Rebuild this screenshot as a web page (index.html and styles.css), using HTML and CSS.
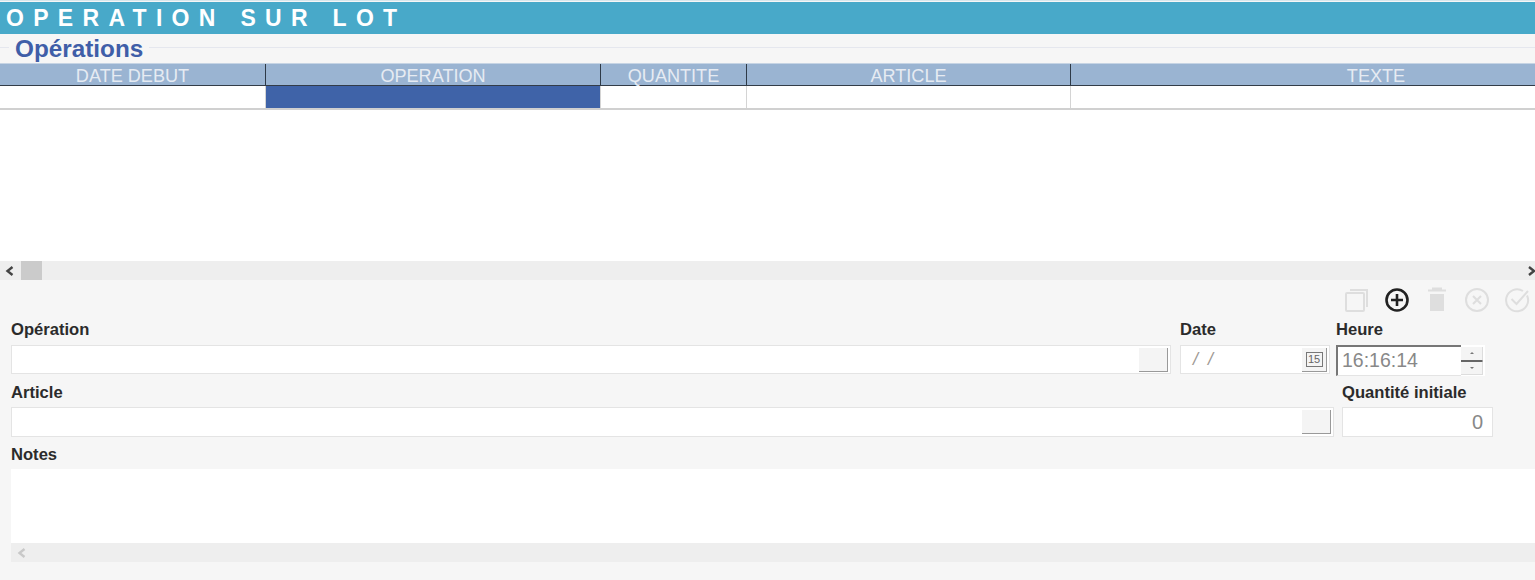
FILE: index.html
```html
<!DOCTYPE html>
<html lang="fr">
<head>
<meta charset="utf-8">
<title>Operation sur lot</title>
<link rel="stylesheet" href="styles.css">
</head>
<body>
<header class="title-bar">OPERATION SUR LOT</header>
<div class="section-head"><span class="section-title">Opérations</span></div>
<div class="grid-wrap">
  <div class="grid-row grid-header">
    <div class="c1">DATE DEBUT</div>
    <div class="c2">OPERATION</div>
    <div class="c3">QUANTITE</div>
    <div class="c4">ARTICLE</div>
    <div class="c5">TEXTE</div>
  </div>
  <div class="grid-row grid-body">
    <div class="c1"></div>
    <div class="c2 selected"></div>
    <div class="c3"></div>
    <div class="c4"></div>
    <div class="c5"></div>
  </div>
  <div class="grid-empty"></div>
  <div class="hscroll">
    <svg class="arrow" width="9" height="10" viewBox="0 0 9 10"><path d="M7.500 1 2.500 5l5 4" fill="none" stroke="#444" stroke-width="2.400"/></svg>
    <span class="thumb"></span>
    <svg class="arrow arrow-right" width="7" height="10" viewBox="0 0 7 10"><path d="M1 1 6 5 1 9" fill="none" stroke="#444" stroke-width="2.400"/></svg>
  </div>
</div>
<main class="form">
  <div class="toolbar">
    <svg class="tool" width="26" height="26" viewBox="0 0 26 26" fill="none" stroke="#dedede" stroke-width="2"><rect x="2" y="6" width="18" height="18" rx="1"/><path d="M6 3h17v17"/></svg>
    <svg class="tool" width="26" height="26" viewBox="0 0 26 26" fill="none" stroke="#222" stroke-width="2.600"><circle cx="13" cy="13" r="10.500"/><path d="M7 13h12M13 7v12"/></svg>
    <svg class="tool" width="26" height="26" viewBox="0 0 26 26" fill="none"><path d="M4 3.500h18M8 1.500h10" stroke="#dedede" stroke-width="2"/><path d="M6 7h14v17H6z" fill="#dedede"/></svg>
    <svg class="tool" width="26" height="26" viewBox="0 0 26 26" fill="none" stroke="#dedede" stroke-width="2"><circle cx="13" cy="13" r="11"/><path d="m9 9 8 8M17 9l-8 8"/></svg>
    <svg class="tool" width="26" height="26" viewBox="0 0 26 26" fill="none" stroke="#dedede" stroke-width="2"><path d="M23 8.500A11 11 0 1 1 19 4"/><path d="m7.500 12 5 5L24 4"/></svg>
  </div>
  <div class="form-row">
    <div class="field f-op">
      <label class="label">Opération</label>
      <div class="input"><span class="pick"></span></div>
    </div>
    <div class="field f-date">
      <label class="label">Date</label>
      <div class="input date-input">
        <span class="value-date">/ /</span>
        <span class="pick pick-cal"><span class="cal">15</span></span>
      </div>
    </div>
    <div class="field f-time">
      <label class="label">Heure</label>
      <div class="time-wrap">
        <div class="time-input">16:16:14</div>
        <div class="spin">
          <span class="spin-btn"><i class="tri-up"></i></span>
          <span class="spin-btn spin-low"><i class="tri-down"></i></span>
        </div>
      </div>
    </div>
  </div>
  <div class="form-row row-two">
    <div class="field f-art">
      <label class="label">Article</label>
      <div class="input tall"><span class="pick"></span></div>
    </div>
    <div class="field f-qty">
      <label class="label">Quantité initiale</label>
      <div class="input tall qty-input">0</div>
    </div>
  </div>
  <div class="notes">
    <label class="label">Notes</label>
    <div class="notes-area"></div>
    <div class="notes-scroll">
      <svg width="9" height="10" viewBox="0 0 9 10"><path d="M7.500 1 2.500 5l5 4" fill="none" stroke="#c8c8c8" stroke-width="2.400"/></svg>
    </div>
  </div>
</main>
</body>
</html>
```
FILE: styles.css
```css
* { box-sizing: border-box; }
html, body { margin: 0; height: 580px; overflow: hidden; }
body { background: #f6f6f6; font-family: "Liberation Sans", Arial, sans-serif; color: #222; border-top: 1px solid #d6e6ec; }

.title-bar {
  margin-top: 1px;
  height: 32px;
  background: #48a9c9;
  color: #fff;
  font-size: 23px;
  font-weight: 700;
  letter-spacing: 9.300px;
  line-height: 33px;
  padding-left: 6px;
  white-space: nowrap;
  overflow: hidden;
}

.section-head {
  height: 29px;
  display: flex;
  align-items: center;
  background: linear-gradient(#e5e7ee, #e5e7ee) 0 13px / 100% 1px no-repeat;
  padding-left: 9px;
}
.section-title {
  background: #f6f6f6;
  color: #3f5ea8;
  font-size: 24.300px;
  font-weight: 700;
  padding: 0 6px;
  line-height: 27px;
  margin-top: -1px;
}

.grid-wrap { background: #fff; }
.grid-row { display: grid; grid-template-columns: 266px 335px 146px 324px 464px; }
.grid-header { height: 23px; background: #9ab4d2; border-bottom: 1px solid #333c48; border-top: 1px solid #c6d4e4; }
.grid-header div {
  color: #e6ebf2;
  font-size: 18.100px;
  line-height: 24px;
  height: 21px;
  text-align: center;
  border-right: 1px solid #2e3a48;
  white-space: nowrap;
}
.grid-header .c5 { border-right: 0; padding-left: 146px; }
.grid-body { height: 24px; border-bottom: 2px solid #d0d0d0; }
.grid-body div { border-right: 1px solid #d4d4d4; }
.grid-body .c5 { border-right: 0; }
.grid-body .selected { background: #3f63a8; }
.grid-empty { height: 151px; }

.hscroll { height: 19px; background: #eeeeee; display: flex; align-items: center; padding-left: 5px; }
.thumb { width: 21px; height: 19px; background: #cbcbcb; margin-left: 7px; }
.arrow-right { margin-left: auto; }

.form { padding-left: 11px; }
.toolbar { display: flex; justify-content: flex-end; gap: 14px; height: 28px; margin-top: 7px; padding-right: 5px; }
.tool { flex: none; }

.form-row { display: flex; margin-top: 6px; }
.row-two { margin-top: 8px; }
.field { display: flex; flex-direction: column; flex: none; }
.label { font-size: 16.600px; font-weight: 700; color: #2b2b2b; line-height: 18px; white-space: nowrap; display: block; }

.f-op { width: 1160px; margin-right: 9px; }
.f-date { width: 150px; margin-right: 6px; }
.f-time { width: 149px; }
.f-art { width: 1323px; margin-right: 8px; }
.f-qty { width: 151px; }

.input {
  margin-top: 6px;
  height: 29px;
  background: #fff;
  border: 1px solid #e4e4e4;
  display: flex;
  justify-content: flex-end;
  align-items: center;
  padding-right: 2px;
}
.tall { height: 30px; margin-top: 5px; }
.pick {
  width: 29px;
  height: 24px;
  background: #f4f4f4;
  border-right: 1px solid #999;
  border-bottom: 1px solid #999;
  display: flex;
  align-items: center;
  justify-content: center;
}
.date-input { justify-content: space-between; color: #999; }
.value-date { font-size: 18px; font-style: italic; padding-left: 12px; word-spacing: 5px; color: #a09a94; }
.pick-cal { width: 25px; }
.cal {
  width: 17px;
  height: 15px;
  border: 1px solid #777;
  font-size: 11px;
  line-height: 13px;
  text-align: center;
  color: #666;
  background: #f4f4f4;
}

.time-wrap { display: flex; margin-top: 6px; height: 31px; align-items: stretch; background: #fff; }
.time-input {
  width: 125px;
  border-top: 2px solid #777;
  border-left: 2px solid #777;
  border-bottom: 1px solid #e4e4e4;
  background: #fff;
  color: #888;
  font-size: 19.500px;
  line-height: 27px;
  padding-left: 4px;
}
.spin { width: 22px; display: flex; flex-direction: column; padding: 2px 0 1px; }
.spin-btn { flex: 1; background: #f4f4f4; border-right: 1px solid #ddd; border-bottom: 1px solid #666; display: flex; align-items: center; justify-content: center; }
.spin-low { border-bottom: 1px solid #ddd; border-top: 1px solid #666; }
.tri-up { width: 0; height: 0; border: 2px solid transparent; border-top: 0; border-bottom: 2px solid #777; }
.tri-down { width: 0; height: 0; border: 2px solid transparent; border-bottom: 0; border-top: 2px solid #777; }

.qty-input { color: #888; font-size: 20px; padding-right: 9px; }

.notes { margin-top: 9px; }
.notes-area { margin-top: 5px; height: 74px; background: #fff; }
.notes-scroll { height: 19px; background: #eeeeee; display: flex; align-items: center; padding-left: 6px; }
```
